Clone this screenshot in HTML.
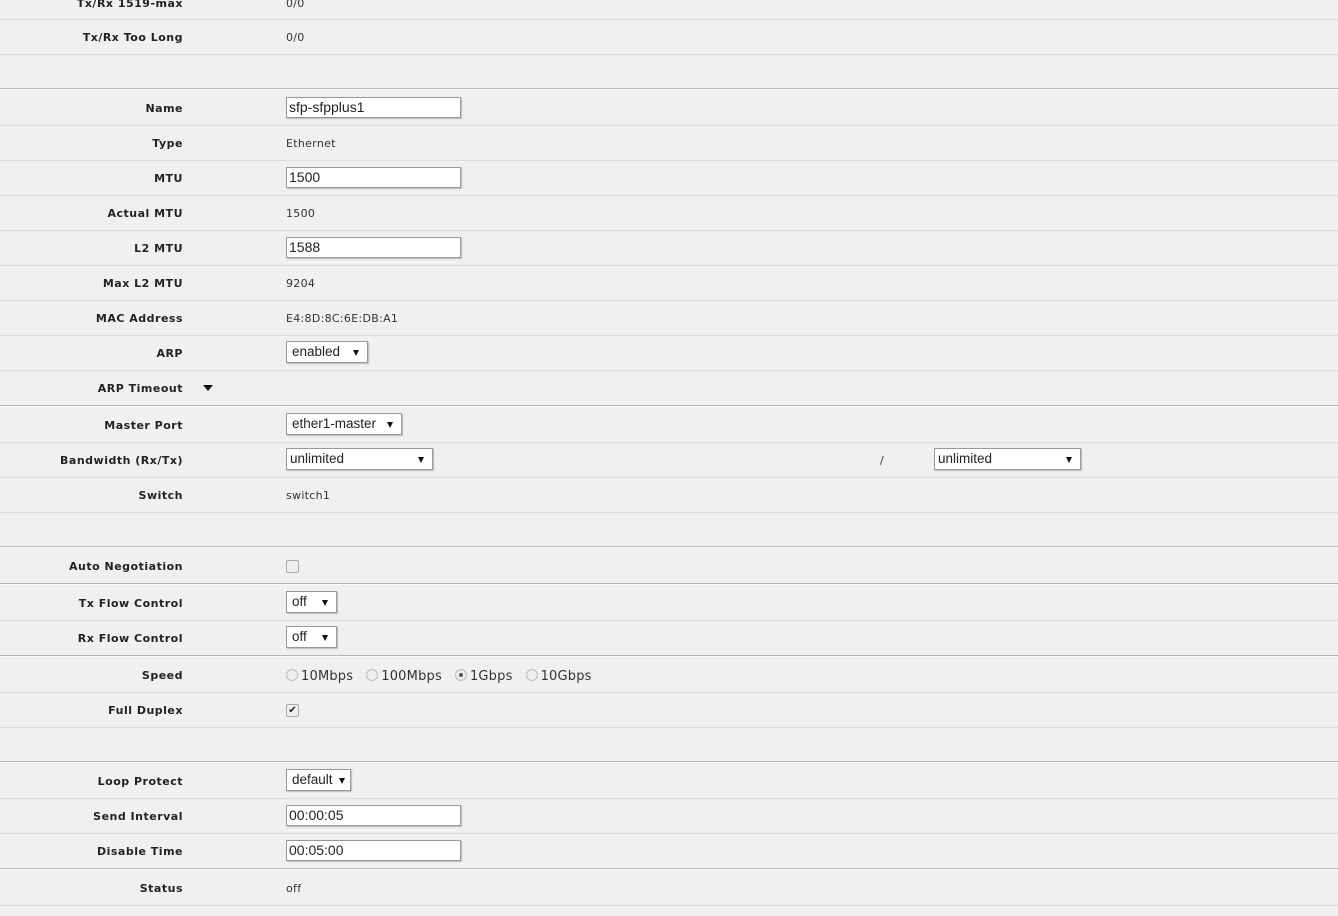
<!DOCTYPE html>
<html><head><style>
body{margin:0;width:1338px;height:916px;background:#f0f0f0;position:relative;overflow:hidden;font-family:"DejaVu Sans",Verdana,sans-serif;}
.l{position:absolute;left:0;width:1338px;height:1px;background:#dcdcdc}
.d{position:absolute;left:0;width:1338px;height:1px;background:#b5b5b5}
.w{position:absolute;left:0;width:1338px;height:1px;background:#fbfbfb}
.lb{position:absolute;right:1155px;font-weight:bold;font-size:11px;letter-spacing:0.5px;color:#222;white-space:nowrap;line-height:14px;margin-top:1px}
.v{position:absolute;left:286px;font-size:11px;letter-spacing:0.3px;color:#333;line-height:14px;white-space:nowrap;margin-top:1px}
.in{position:absolute;left:286px;width:171px;height:19px;background:#fff;border:1px solid #999;box-shadow:1px 1px 1px #bbb;font-family:"Liberation Sans",Arial,sans-serif;font-size:14px;line-height:19px;padding-left:2px;box-sizing:content-box;color:#222}
.sel{position:absolute;height:20px;background:#fff;border:1px solid #999;box-shadow:1px 1px 1px #bbb;font-family:"Liberation Sans",Arial,sans-serif;font-size:13.5px;line-height:20px;color:#222;box-sizing:border-box}
.sel span{position:absolute;left:5px;top:0}
.sel i{position:absolute;right:8px;top:8px;width:0;height:0;border-left:3px solid transparent;border-right:3px solid transparent;border-top:6px solid #111}
.rad{display:inline-block;width:10px;height:10px;border:1px solid #bbb;border-radius:50%;background:#eee;vertical-align:-1px;margin-right:3px;position:relative}
</style></head><body>
<div class="l" style="top:19px"></div>
<div class="l" style="top:54px"></div>
<div class="lb" style="top:-4px">Tx/Rx 1519-max</div><div class="v" style="top:-4px">0/0</div>
<div class="lb" style="top:30px">Tx/Rx Too Long</div><div class="v" style="top:30px">0/0</div>

<div class="d" style="top:88px"></div><div class="w" style="top:89px"></div>
<div class="l" style="top:125px"></div><div class="l" style="top:160px"></div><div class="l" style="top:195px"></div><div class="l" style="top:230px"></div><div class="l" style="top:265px"></div><div class="l" style="top:300px"></div><div class="l" style="top:335px"></div><div class="l" style="top:370px"></div>
<div class="lb" style="top:101px">Name</div><div class="in" style="top:97px">sfp-sfpplus1</div>
<div class="lb" style="top:136px">Type</div><div class="v" style="top:136px">Ethernet</div>
<div class="lb" style="top:171px">MTU</div><div class="in" style="top:167px">1500</div>
<div class="lb" style="top:206px">Actual MTU</div><div class="v" style="top:206px">1500</div>
<div class="lb" style="top:241px">L2 MTU</div><div class="in" style="top:237px">1588</div>
<div class="lb" style="top:276px">Max L2 MTU</div><div class="v" style="top:276px">9204</div>
<div class="lb" style="top:311px">MAC Address</div><div class="v" style="top:311px">E4:8D:8C:6E:DB:A1</div>
<div class="lb" style="top:346px">ARP</div><div class="sel" style="left:286px;top:341px;width:82px;height:22px"><span>enabled</span><i></i></div>
<div class="lb" style="top:381px">ARP Timeout</div><div style="position:absolute;left:203px;top:385px;width:0;height:0;border-left:5px solid transparent;border-right:5px solid transparent;border-top:6px solid #111"></div>

<div class="d" style="top:405px"></div><div class="w" style="top:406px"></div>
<div class="l" style="top:442px"></div><div class="l" style="top:477px"></div><div class="l" style="top:512px"></div>
<div class="lb" style="top:418px">Master Port</div><div class="sel" style="left:286px;top:413px;width:116px;height:22px"><span>ether1-master</span><i></i></div>
<div class="lb" style="top:453px">Bandwidth (Rx/Tx)</div><div class="sel" style="left:286px;top:448px;width:147px;height:22px"><span style="left:3px">unlimited</span><i></i></div>
<div class="v" style="left:880px;top:453px">/</div>
<div class="sel" style="left:934px;top:448px;width:147px;height:22px"><span style="left:3px">unlimited</span><i></i></div>
<div class="lb" style="top:488px">Switch</div><div class="v" style="top:488px">switch1</div>

<div class="d" style="top:546px"></div><div class="w" style="top:547px"></div>
<div class="lb" style="top:559px">Auto Negotiation</div>
<div style="position:absolute;left:286px;top:560px;width:11px;height:11px;border:1px solid #aaa;border-radius:2px;background:#eee"></div>

<div class="d" style="top:583px"></div><div class="w" style="top:584px"></div>
<div class="l" style="top:620px"></div>
<div class="lb" style="top:596px">Tx Flow Control</div><div class="sel" style="left:286px;top:591px;width:51px;height:22px"><span>off</span><i></i></div>
<div class="lb" style="top:631px">Rx Flow Control</div><div class="sel" style="left:286px;top:626px;width:51px;height:22px"><span>off</span><i></i></div>

<div class="d" style="top:655px"></div><div class="w" style="top:656px"></div>
<div class="l" style="top:692px"></div><div class="l" style="top:727px"></div>
<div class="lb" style="top:668px">Speed</div>
<div class="v" style="top:668px;font-size:13px;color:#333;line-height:16px;letter-spacing:0.2px"><span class="rad"></span>10Mbps&nbsp;&nbsp; <span class="rad"></span>100Mbps&nbsp;&nbsp; <span class="rad"><span style="position:absolute;left:3px;top:3px;width:4px;height:4px;border-radius:50%;background:#555"></span></span>1Gbps&nbsp;&nbsp; <span class="rad"></span>10Gbps</div>
<div class="lb" style="top:703px">Full Duplex</div>
<div style="position:absolute;left:286px;top:704px;width:11px;height:11px;border:1px solid #aaa;border-radius:2px;background:#eee;font-size:10px;font-weight:bold;line-height:11px;text-align:center;color:#222">✔</div>

<div class="d" style="top:761px"></div><div class="w" style="top:762px"></div>
<div class="l" style="top:798px"></div><div class="l" style="top:833px"></div>
<div class="lb" style="top:774px">Loop Protect</div><div class="sel" style="left:286px;top:769px;width:65px;height:22px"><span>default</span><i style="right:5px"></i></div>
<div class="lb" style="top:809px">Send Interval</div><div class="in" style="top:805px">00:00:05</div>
<div class="lb" style="top:844px">Disable Time</div><div class="in" style="top:840px">00:05:00</div>

<div class="d" style="top:868px"></div><div class="w" style="top:869px"></div>
<div class="l" style="top:905px"></div>
<div class="lb" style="top:881px">Status</div><div class="v" style="top:881px">off</div>
</body></html>
